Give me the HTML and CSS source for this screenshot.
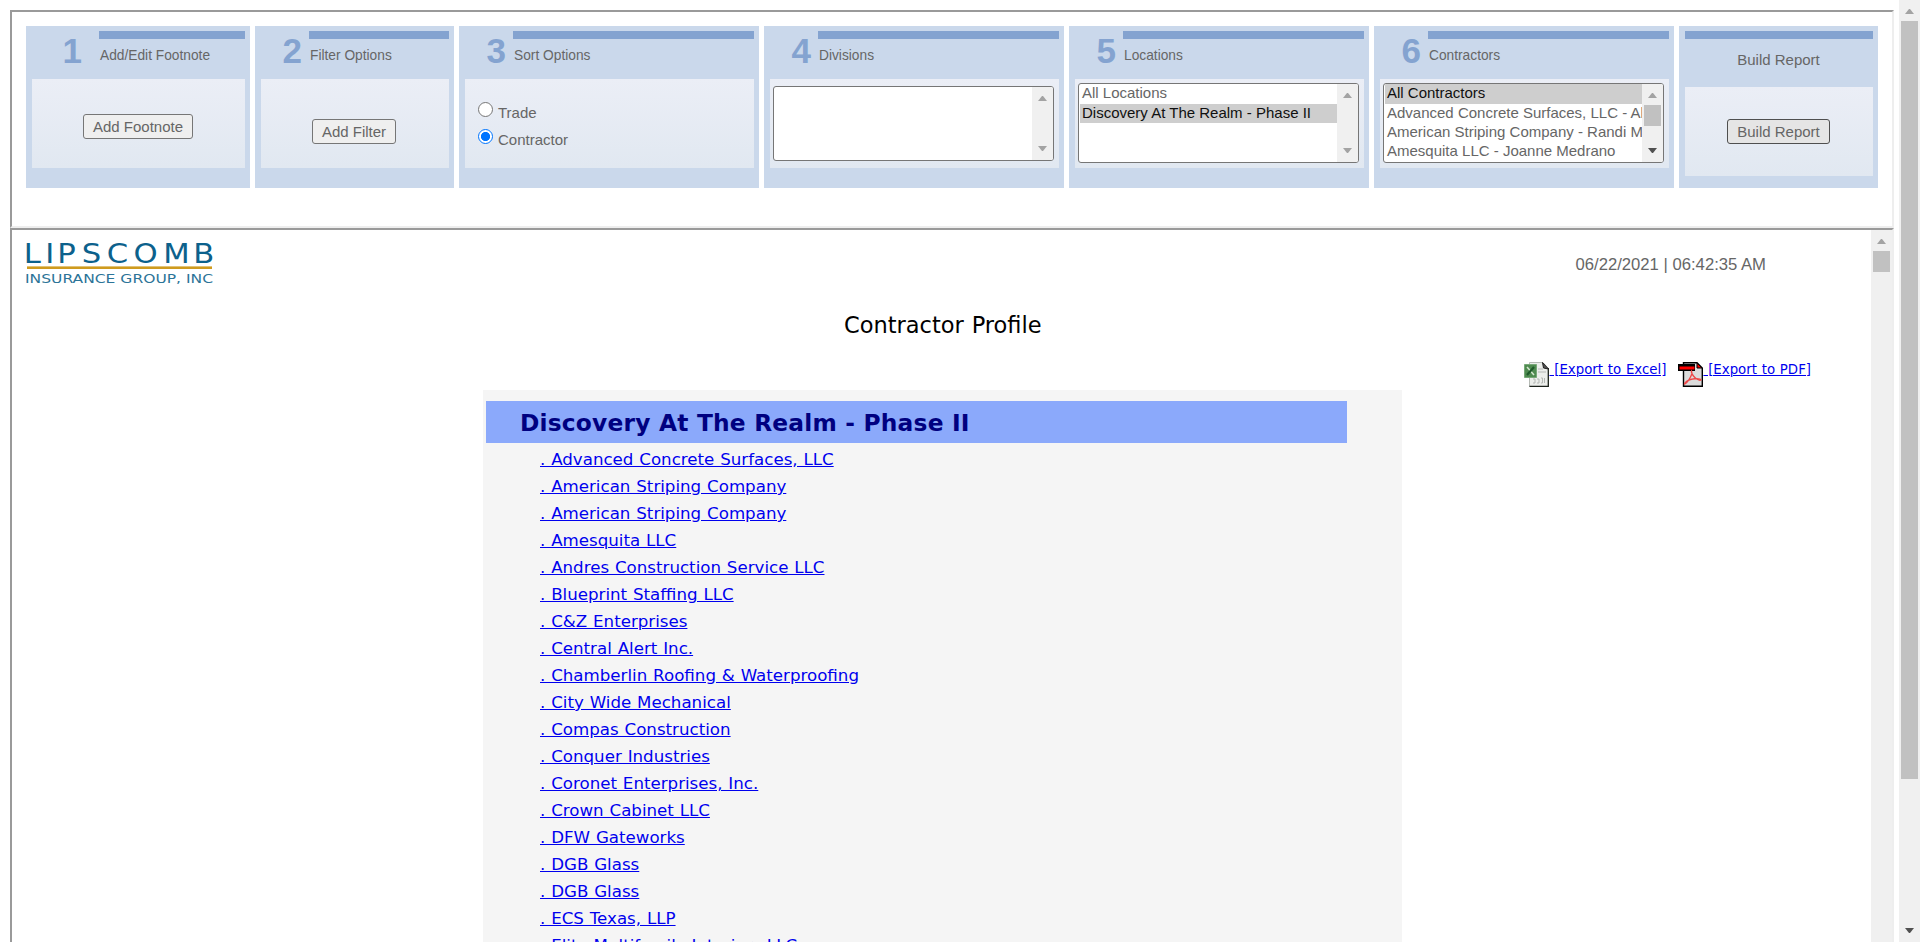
FILE: index.html
```html
<!DOCTYPE html>
<html lang="en">
<head>
<meta charset="utf-8">
<title>Contractor Profile</title>
<link rel="stylesheet" href="styles.css">
</head>
<body>
<div class="page">
  <main class="frames">
    <section class="frame options">
      <div class="panel p1">
        <header class="head"><span class="num">1</span><span class="label">Add/Edit Footnote</span></header>
        <div class="box center up"><button class="btn">Add Footnote</button></div>
      </div>
      <div class="panel p2">
        <header class="head"><span class="num">2</span><span class="label">Filter Options</span></header>
        <div class="box center"><button class="btn">Add Filter</button></div>
      </div>
      <div class="panel p3">
        <header class="head"><span class="num">3</span><span class="label">Sort Options</span></header>
        <div class="box radios">
          <label class="radio"><i class="dot"></i><span>Trade</span></label>
          <label class="radio"><i class="dot on"></i><span>Contractor</span></label>
        </div>
      </div>
      <div class="panel p3">
        <header class="head"><span class="num">4</span><span class="label">Divisions</span></header>
        <div class="box pick">
          <div class="list short"><div class="opts"></div>
            <div class="bar"><svg class="arrow" viewBox="0 0 9 5"><path d="M4 0h1l4 5H0z"/></svg><svg class="arrow" viewBox="0 0 9 5"><path d="M0 0h9L5 5H4z"/></svg></div></div>
        </div>
      </div>
      <div class="panel p3">
        <header class="head"><span class="num">5</span><span class="label">Locations</span></header>
        <div class="box pick">
          <div class="list"><div class="opts"><div class="opt">All Locations</div><div class="opt sel">Discovery At The Realm - Phase II</div></div>
            <div class="bar"><svg class="arrow" viewBox="0 0 9 5"><path d="M4 0h1l4 5H0z"/></svg><svg class="arrow" viewBox="0 0 9 5"><path d="M0 0h9L5 5H4z"/></svg></div></div>
        </div>
      </div>
      <div class="panel p3">
        <header class="head"><span class="num">6</span><span class="label">Contractors</span></header>
        <div class="box pick">
          <div class="list"><div class="opts"><div class="opt sel">All Contractors</div><div class="opt">Advanced Concrete Surfaces, LLC - Al</div><div class="opt">American Striping Company - Randi M</div><div class="opt">Amesquita LLC - Joanne Medrano</div></div>
            <div class="bar"><svg class="arrow" viewBox="0 0 9 5"><path d="M4 0h1l4 5H0z"/></svg><div class="thumb small"></div><svg class="arrow dark" viewBox="0 0 9 5"><path d="M0 0h9L5 5H4z"/></svg></div></div>
        </div>
      </div>
      <div class="panel p7">
        <header class="head tall"><span class="label">Build Report</span></header>
        <div class="box center last"><button class="btn hot">Build Report</button></div>
      </div>
    </section>

    <section class="frame report">
      <div class="content">
        <div class="masthead">
          <svg class="logo" width="190" height="46" viewBox="0 0 190 46">
            <text class="brand" transform="scale(1.18 1)" x="-2 16.4 26.6 47.3 68.5 91.2 116.4 141.8" y="19.500">LIPSCOMB</text>
            <rect x="1" y="23.400" width="185" height="2.600" fill="#cf9b1e"/>
            <text class="sub" x="-1" y="39.700" textLength="188" lengthAdjust="spacingAndGlyphs">INSURANCE GROUP, INC</text>
          </svg>
          <span class="date">06/22/2021 | 06:42:35 AM</span>
        </div>
        <h1 class="title">Contractor Profile</h1>
        <div class="exports">
          <a class="export" href="#"><svg class="ico" viewBox="0 0 25 25">
            <path d="M5.500 .5H19l5.500 6v18h-19z" fill="#eceeeb" stroke="#b5bab5"/>
            <path d="M24.300 6v18.500H5.500" fill="none" stroke="#1c221c" stroke-width="1.300"/>
            <path d="M18.500.5l6 6.500-5-1z" fill="#555" stroke="#222"/>
            <path d="M14 7h5M14 10h8M9 17h2v4H9M13 17h2v4h-2M17 16h1.500v5H17M20.500 16v5" stroke="#b4b7b4" fill="none"/>
            <path d="M.5 2.500h12v13H.5z" fill="#4f8b50" stroke="#77a877"/>
            <path d="M3 5l7 8" stroke="#d5e8d0" stroke-width="1.500"/><path d="M10 5l-7 8" stroke="#1f5a2a" stroke-width="2.200"/>
          </svg><span>&nbsp;[Export to Excel]</span></a>
          <a class="export" href="#"><svg class="ico" viewBox="0 0 25 25">
            <path d="M5.500.7H19l5.300 5.300v18.300H5.500z" fill="#dcdcdc" stroke="#000" stroke-width="1.400"/>
            <path d="M19 1v5h5z" fill="#e00" stroke="#000"/>
            <path d="M0 2h17v7H0z" fill="#000"/><path d="M1.500 4.500h15v3h-15z" fill="#f00"/>
            <path d="M13.500 9c1 2-.5 5.500-2.500 8.500-1.500 2.500-3.500 4.500-4.500 4.500 0-2 4-4.500 8-5 4-.6 8-.5 8.500 1-2 1-5.500-1.500-7.500-4-1.500-2-2.500-4-2-5z" fill="none" stroke="#ee4747" stroke-width="1.300"/>
          </svg><span>&nbsp;[Export to PDF]</span></a>
        </div>
        <div class="sheet">
          <h2 class="place">Discovery At The Realm - Phase II</h2>
          <ul class="names">
            <li><a href="#">. Advanced Concrete Surfaces, LLC</a></li>
            <li><a href="#">. American Striping Company</a></li>
            <li><a href="#">. American Striping Company</a></li>
            <li><a href="#">. Amesquita LLC</a></li>
            <li><a href="#">. Andres Construction Service LLC</a></li>
            <li><a href="#">. Blueprint Staffing LLC</a></li>
            <li><a href="#">. C&amp;Z Enterprises</a></li>
            <li><a href="#">. Central Alert Inc.</a></li>
            <li><a href="#">. Chamberlin Roofing &amp; Waterproofing</a></li>
            <li><a href="#">. City Wide Mechanical</a></li>
            <li><a href="#">. Compas Construction</a></li>
            <li><a href="#">. Conquer Industries</a></li>
            <li><a href="#">. Coronet Enterprises, Inc.</a></li>
            <li><a href="#">. Crown Cabinet LLC</a></li>
            <li><a href="#">. DFW Gateworks</a></li>
            <li><a href="#">. DGB Glass</a></li>
            <li><a href="#">. DGB Glass</a></li>
            <li><a href="#">. ECS Texas, LLP</a></li>
            <li><a href="#">. Elite Multifamily Interiors LLC</a></li>
          </ul>
        </div>
      </div>
      <div class="bar"><svg class="arrow" viewBox="0 0 9 5"><path d="M4 0h1l4 5H0z"/></svg><div class="thumb small"></div></div>
    </section>
  </main>
  <div class="bar outer"><svg class="arrow" viewBox="0 0 9 5"><path d="M4 0h1l4 5H0z"/></svg><div class="thumb tallthumb"></div><svg class="arrow dark" viewBox="0 0 9 5"><path d="M0 0h9L5 5H4z"/></svg></div>
</div>
</body>
</html>
```

FILE: styles.css
```css
* { box-sizing: border-box; }
body { margin: 0; background: #fff; color: #666; font-family: "Liberation Sans", Arial, sans-serif; font-size: 15px; overflow: hidden; }
.page { display: flex; height: 942px; overflow: hidden; }
.frames { flex: 1; padding: 10px 5px 0 10px; display: flex; flex-direction: column; min-width: 0; }
.frame { border: 2px solid; border-color: #9a9a9a #eeeeee #eeeeee #9a9a9a; display: flex; }
.options { height: 218px; flex: none; padding: 14px 0 0 14px; gap: 5px; align-items: flex-start; }
.report { height: 760px; flex: none; }

/* option panels */
.panel { height: 162px; background: #cad8eb; padding: 5px 5px 0 6px; }
.p1 { width: 224px; --n: 67px; --np: 17px; }
.p2 { width: 199px; --n: 48px; --np: 7px; }
.p3 { width: 300px; --n: 48px; --np: 7px; }
.p7 { width: 199px; }
.head { display: flex; height: 48px; }
.num { width: var(--n); padding-right: var(--np); text-align: right; font-weight: bold; font-size: 35px; line-height: 40px; color: #84a3d0; }
.label { flex: 1; border-top: 8px solid #84a3d0; padding: 9px 0 0 1px; font-size: 13.75px; line-height: 16px; }
.tall { height: 56px; }
.tall .label { font-size: 15px; text-align: center; padding: 12px 1px 0 0; line-height: 18px; }
.box { height: 89px; background: linear-gradient(#ebeef6, #e1e8f1); }
.center { display: flex; justify-content: center; align-items: flex-start; padding: 40px 7px 0 0; }
.p1 .center { padding: 35px 1px 0 0; }
.p2 .center { padding-right: 2px; }
.p7 .center { padding: 32px 1px 0 0; }
.btn { height: 25px; padding: 0 8.750px; border: 1px solid #767676; border-radius: 3px; background: #efefef; color: #666; font: 15px/23px "Liberation Sans", Arial, sans-serif; }
.hot { border-color: #4f4f4f; background: #e5e5e5; }
.radios { padding: 23px 0 0 13px; }
.radio { display: flex; gap: 5px; height: 27px; line-height: 21px; }
.dot { width: 15px; height: 15px; border: 1px solid #767676; border-radius: 50%; background: #fff; }
.on { border: 1.500px solid #0075ff; background: radial-gradient(circle, #0075ff 4.200px, #fff 5px); }

/* list boxes */
.pick { padding: 4px 5px 0 3px; }
.list { display: flex; width: 281px; height: 80px; border: 1px solid #767676; border-radius: 3px; background: #fff; overflow: hidden; }
.short { height: 75px; margin-top: 3px; }
.opts { flex: 1; min-width: 0; padding-left: 1px; }
.opt { height: 19px; padding-left: 2px; line-height: 17px; white-space: nowrap; overflow: hidden; }
.opt:first-child { height: 20px; }
.sel { background: #cecece; color: #101010; }

/* scroll bars */
.bar { width: 21px; flex: none; background: #f0f0f0; display: flex; flex-direction: column; align-items: center; padding: 9px 0; }
.arrow { width: 9px; height: 5px; flex: none; fill: #a3a3a3; }
.arrow:last-child:not(:first-child) { margin-top: auto; }
.dark { fill: #505050; }
.thumb { width: 17px; background: #c1c1c1; margin-top: 7px; flex: none; }
.small { height: 21px; }
.tallthumb { height: 758px; }

/* report */
.content { flex: 1; min-width: 0; padding-left: 14px; background: #fff; }
.masthead { display: flex; justify-content: space-between; height: 80px; padding: 13px 105px 0 0; }
.logo { flex: none; overflow: visible; }
.brand { font: 26px "DejaVu Sans", sans-serif; fill: #0c618c; }
.sub { font: 12px "DejaVu Sans", sans-serif; fill: #2c7498; }
.date { font-size: 16.670px; line-height: 20px; padding-top: 12px; white-space: nowrap; }
.title { margin: 0; padding-left: 818px; height: 52px; color: #000; font: 22.500px/30px "DejaVu Sans", Verdana, sans-serif; word-spacing: .7px; }
.exports { display: flex; justify-content: flex-end; gap: 12px; height: 28px; padding-right: 60px; }
.export { display: flex; color: #0000ee; font: 13.330px/16px "DejaVu Sans", Verdana, sans-serif; word-spacing: .5px; white-space: nowrap; }
.ico { width: 25px; height: 25px; }
.sheet { width: 919px; height: 700px; margin-left: 457px; padding: 11px 0 0 3px; background: #f5f5f5; }
.place { width: 861px; height: 42px; margin: 0; padding: 1px 0 0 34px; background: #8ba9fb; color: #000080; font: bold 23.330px/42px "DejaVu Sans", Verdana, sans-serif; letter-spacing: .2px; }
.names { list-style: none; margin: 3px 0 0; padding: 0 0 0 54px; font: 16.670px/27px "DejaVu Sans", Verdana, sans-serif; word-spacing: .57px; }
.names li { height: 27px; }
.names a { display: inline-block; color: #0000ee; }
.names a::first-letter { letter-spacing: 1.2px; }
```
